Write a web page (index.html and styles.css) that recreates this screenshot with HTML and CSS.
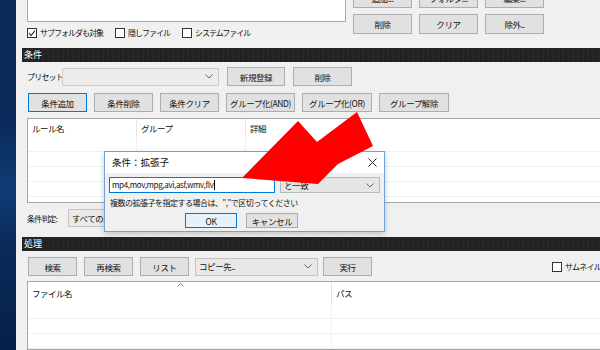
FILE: index.html
```html
<!DOCTYPE html>
<html lang="ja">
  <head>
    <meta charset="UTF-8" />
    <title>ファイル検索</title>
    <link rel="stylesheet" href="styles.css">
  </head>
  <body>
    <!-- desktop strip on the left -->
    <div class="desk"></div>

    <div class="win">
      <!-- folder list and its buttons -->
      <div class="top">
        <div class="top-left">
          <div class="listbox"></div>
          <div class="checks">
            <label class="check"><span class="box on"><svg width="8" height="8" viewBox="0 0 8 8"><polyline points="1,4 3,6.5 7,1.5" fill="none" stroke="#222" stroke-width="1.1"/></svg></span>サブフォルダも対象</label>
            <label class="check"><span class="box"></span>隠しファイル</label>
            <label class="check"><span class="box"></span>システムファイル</label>
          </div>
        </div>
        <div class="top-buttons">
          <button class="btn">追加...</button>
          <button class="btn">フォルダ...</button>
          <button class="btn">編集...</button>
          <button class="btn">削除</button>
          <button class="btn">クリア</button>
          <button class="btn">除外..</button>
        </div>
      </div>

      <!-- conditions -->
      <div class="bar">条件</div>

      <div class="row preset-row">
        <span class="label">プリセット:</span>
        <div class="combo preset-combo"><span></span><svg width="8" height="5" viewBox="0 0 8 5"><polyline points="0.5,0.5 4,4 7.5,0.5" fill="none" stroke="#666"/></svg></div>
        <button class="btn w58">新規登録</button>
        <button class="btn w59">削除</button>
      </div>

      <div class="row cond-buttons">
        <button class="btn w59 default">条件追加</button>
        <button class="btn w59">条件削除</button>
        <button class="btn w59">条件クリア</button>
        <button class="btn w69">グループ化(AND)</button>
        <button class="btn w70">グループ化(OR)</button>
        <button class="btn w70">グループ解除</button>
      </div>

      <div class="list rules">
        <div class="list-head">
          <div class="cell">ルール名</div>
          <div class="cell">グループ</div>
          <div class="cell">詳細</div>
        </div>
        <div class="list-row"><div></div><div></div><div></div></div>
        <div class="list-row"><div></div><div></div><div></div></div>
        <div class="list-row"><div></div><div></div><div></div></div>
        <div class="list-row"><div></div><div></div><div></div></div>
      </div>

      <div class="row judge-row">
        <span class="label">条件判定:</span>
        <div class="combo judge-combo"><span>すべての条件に一致</span></div>
      </div>

      <!-- processing -->
      <div class="bar">処理</div>

      <div class="row proc-row">
        <button class="btn w49">検索</button>
        <button class="btn w49">再検索</button>
        <button class="btn w49">リスト</button>
        <div class="combo copy-combo"><span>コピー先..</span><svg width="8" height="5" viewBox="0 0 8 5"><polyline points="0.5,0.5 4,4 7.5,0.5" fill="none" stroke="#666"/></svg></div>
        <button class="btn w49">実行</button>
        <label class="check thumb"><span class="box"></span>サムネイル表示</label>
      </div>

      <div class="list files">
        <div class="list-head">
          <div class="cell">ファイル名<svg class="sort" width="7" height="4" viewBox="0 0 7 4"><polyline points="0.5,3.5 3.5,0.5 6.5,3.5" fill="none" stroke="#888"/></svg></div>
          <div class="cell">パス</div>
        </div>
        <div class="list-row"><div></div><div></div></div>
        <div class="list-row"><div></div><div></div></div>
        <div class="list-row"><div></div><div></div></div>
      </div>
    </div>

    <!-- extension dialog -->
    <div class="dialog">
      <div class="dlg-title">
        <span>条件：拡張子</span>
        <svg width="9" height="9" viewBox="0 0 9 9"><path d="M0.5,0.5 L8.5,8.5 M8.5,0.5 L0.5,8.5" stroke="#222" stroke-width="1"/></svg>
      </div>
      <div class="dlg-body">
        <div class="dlg-inputs">
          <div class="text-input">mp4,mov,mpg,avi,asf,wmv,flv<span class="caret"></span></div>
          <div class="combo match-combo"><span>と一致</span><svg width="8" height="5" viewBox="0 0 8 5"><polyline points="0.5,0.5 4,4 7.5,0.5" fill="none" stroke="#666"/></svg></div>
        </div>
        <div class="dlg-note">複数の拡張子を指定する場合は、","で区切ってください</div>
        <div class="dlg-buttons">
          <button class="btn ok">OK</button>
          <button class="btn">キャンセル</button>
        </div>
      </div>
    </div>

    <!-- red arrow drawn over the screenshot -->
    <svg class="arrow" width="600" height="350" viewBox="0 0 600 350">
      <polygon points="242,178 298,121 317,142 357,112 373,146 338,164 318,184" fill="#ff0000"/>
    </svg>
  </body>
</html>
```

FILE: styles.css
```css
/* page */
body {
  margin: 0;
  width: 600px;
  height: 350px;
  overflow: hidden;
  display: flex;
  background-color: #f0f0f0;
  font-family: "Noto Sans CJK JP", "Noto Sans", sans-serif;
  font-size: 8.5px;
  line-height: 11px;
  color: #111;
}

.desk {
  width: 16px;
  flex-shrink: 0;
  background: linear-gradient(#0b2b5a, #0a2b5b 35%, #103c76 55%, #0a2a58 70%, #07204a);
}

.win {
  flex: 1;
  display: flex;
  flex-direction: column;
  min-width: 0;
}

/* buttons */
.btn {
  height: 19px;
  padding: 0;
  font-family: inherit;
  font-size: 8.5px;
  letter-spacing: -0.4px;
  white-space: nowrap;
  color: #111;
  background-color: #e1e1e1;
  border: 1px solid #adadad;
  box-sizing: border-box;
  flex-shrink: 0;
}

.btn.default {
  border-color: #0078d7;
}

.w49 { width: 49px; }
.w58 { width: 58px; }
.w59 { width: 59px; }
.w69 { width: 69px; }
.w70 { width: 70px; }

/* top area */
.top {
  display: flex;
  align-items: flex-start;
  margin-top: -12px;
}

.top-left {
  margin-left: 11px;
  width: 319px;
}

.listbox {
  height: 34px;
  background-color: #fff;
  border: 1px solid #a9a9a9;
  box-sizing: border-box;
}

.top-buttons {
  margin-left: 7px;
  display: grid;
  grid-template-columns: repeat(3, 59px);
  grid-auto-rows: 20px;
  column-gap: 7px;
  row-gap: 6px;
}

.top-buttons .btn {
  height: 20px;
}

.checks {
  display: flex;
  gap: 12px;
  margin-top: 5px;
  font-size: 8px;
  letter-spacing: -1px;
}

.check {
  display: flex;
  align-items: center;
  gap: 3px;
  white-space: nowrap;
}

.box {
  width: 10px;
  height: 10px;
  border: 1px solid #333;
  box-sizing: border-box;
  background-color: #fff;
  display: flex;
  align-items: center;
  justify-content: center;
}

/* section bars */
.bar {
  margin-left: 6px;
  margin-top: 10px;
  height: 14px;
  padding-left: 2px;
  line-height: 14px;
  font-size: 9px;
  color: #fff;
  background: repeating-linear-gradient(90deg, #222 0, #2a2a2a 2px, #1d1d1d 3px, #262626 5px);
}

.row {
  display: flex;
  align-items: center;
  margin-left: 11px;
}

.label {
  white-space: nowrap;
  flex-shrink: 0;
  font-size: 8px;
  letter-spacing: -0.8px;
}

/* combo boxes */
.combo {
  height: 18px;
  box-sizing: border-box;
  border: 1px solid #c3c3c3;
  background-color: #e8e8e8;
  display: flex;
  align-items: center;
  justify-content: space-between;
  padding: 0 5px 0 3px;
  flex-shrink: 0;
  white-space: nowrap;
  overflow: hidden;
  letter-spacing: -0.4px;
}

.preset-row {
  margin-top: 5px;
}

.preset-row .label {
  width: 35px;
}

.preset-combo {
  width: 157px;
  margin-right: 8px;
  background-color: #ececec;
  border-color: #cdcdcd;
}

.preset-row .btn + .btn {
  margin-left: 8px;
}

.cond-buttons {
  margin-top: 7px;
  gap: 7px;
  margin-left: 12px;
}

/* list views */
.list {
  margin-left: 11px;
  background-color: #fff;
  border: 1px solid #a5a5a5;
  border-right: none;
  box-sizing: border-box;
}

.rules {
  margin-top: 6px;
  height: 90px;
}

.list-head,
.list-row {
  display: grid;
}

.rules .list-head,
.rules .list-row {
  grid-template-columns: 109px 109px 1fr;
}

.files .list-head,
.files .list-row {
  grid-template-columns: 304px 1fr;
}

.list-head {
  height: 18px;
}

.list-head .cell {
  padding-left: 4px;
  border-right: 1px solid #e5e5e5;
  line-height: 18px;
  position: relative;
  letter-spacing: -0.5px;
}

.list-row {
  height: 15px;
  box-sizing: border-box;
  border-bottom: 1px solid #f0f0f0;
}

.list-row div {
  border-right: 1px solid #f2f2f2;
}

.list-head .cell:last-child,
.list-row div:last-child {
  border-right: none;
}

.judge-row {
  margin-top: 6px;
}

.judge-row .label {
  width: 41px;
}

.judge-combo {
  width: 150px;
  background-color: #eaeaea;
}

.proc-row {
  margin-top: 6px;
  margin-left: 12px;
  gap: 7px;
}

.copy-combo {
  width: 123px;
  margin-left: -1px;
  margin-right: -2px;
}

.thumb {
  margin-left: 173px;
  font-size: 8px;
  letter-spacing: -0.8px;
}

.files {
  margin-top: 5px;
  flex: 1;
}

.files .list-head {
  height: 22px;
}

.files .list-head .cell {
  line-height: 22px;
}

.sort {
  position: absolute;
  left: 149px;
  top: 1px;
}

/* dialog over the window */
.dialog {
  position: absolute;
  left: 104px;
  top: 151px;
  width: 281px;
  height: 81px;
  box-sizing: border-box;
  border: 1px solid #6ea2d8;
  background-color: #f0f0f0;
  box-shadow: 0 2px 6px rgba(0, 0, 0, 0.2);
  display: flex;
  flex-direction: column;
}

.dlg-title {
  height: 21px;
  background-color: #fff;
  display: flex;
  align-items: center;
  justify-content: space-between;
  padding: 0 7px 0 7px;
  font-size: 9.5px;
}

.dlg-body {
  padding: 4px 4px 0 4px;
}

.dlg-inputs {
  display: flex;
  gap: 5px;
}

.text-input {
  width: 166px;
  height: 16px;
  box-sizing: border-box;
  border: 1px solid #0078d7;
  background-color: #fff;
  padding-left: 2px;
  line-height: 14px;
  font-size: 8px;
  letter-spacing: -0.35px;
  display: flex;
  align-items: center;
}

.caret {
  width: 0;
  height: 10px;
  margin-left: 1px;
  border-left: 1px solid #000;
}

.match-combo {
  width: 100px;
  height: 16px;
  background-color: #e5e5e5;
  border-color: #b9b9b9;
}

.dlg-note {
  margin-top: 4px;
  padding-left: 1px;
  font-size: 8px;
  letter-spacing: -0.5px;
}

.dlg-buttons {
  display: flex;
  gap: 9px;
  margin-top: 5px;
  padding-left: 76px;
}

.dlg-buttons .btn {
  width: 52px;
  height: 15px;
  font-size: 8.5px;
}

.btn.ok {
  background-color: #e5f1fb;
  border-color: #0078d7;
}

.arrow {
  position: absolute;
  left: 0;
  top: 0;
  pointer-events: none;
}
```
